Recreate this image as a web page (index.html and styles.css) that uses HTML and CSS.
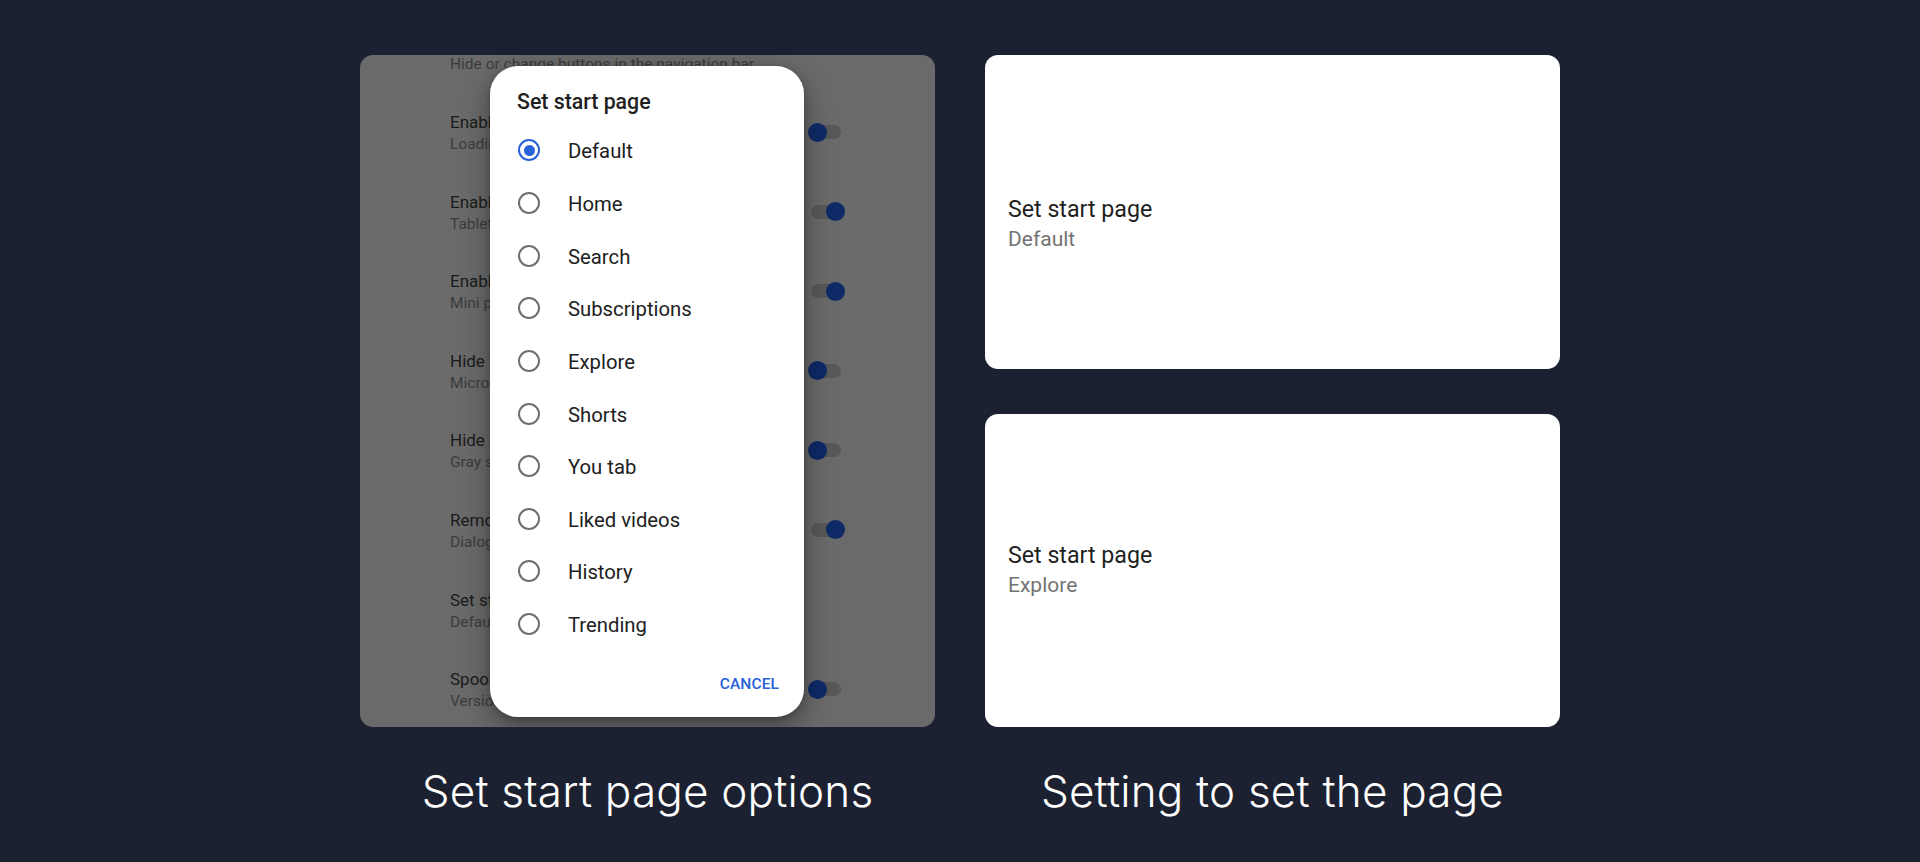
FILE: index.html
```html
<!DOCTYPE html>
<html lang="en">
<head>
<meta charset="utf-8">
<title>Set start page</title>
<link rel="stylesheet" href="styles.css">
</head>
<body>
<main class="stage">
  <section class="column">
    <div class="panel">
      <ul class="settings">
        <li class="row"><div class="row-text"><div class="row-title">Navigation buttons</div><div class="row-sum">Hide or change buttons in the navigation bar</div></div></li>
        <li class="row"><div class="row-text"><div class="row-title">Enable gradient loading screen</div><div class="row-sum">Loading screen will have a gradient background</div></div><span class="switch"><span class="thumb"></span></span></li>
        <li class="row"><div class="row-text"><div class="row-title">Enable tablet layout</div><div class="row-sum">Tablet layout is enabled</div></div><span class="switch on"><span class="thumb"></span></span></li>
        <li class="row"><div class="row-text"><div class="row-title">Enable tablet mini player</div><div class="row-sum">Mini player is enabled</div></div><span class="switch on"><span class="thumb"></span></span></li>
        <li class="row"><div class="row-text"><div class="row-title">Hide floating microphone button</div><div class="row-sum">Microphone button is shown</div></div><span class="switch"><span class="thumb"></span></span></li>
        <li class="row"><div class="row-text"><div class="row-title">Hide gray separator</div><div class="row-sum">Gray separators are shown</div></div><span class="switch"><span class="thumb"></span></span></li>
        <li class="row"><div class="row-text"><div class="row-title">Remove viewer discretion dialog</div><div class="row-sum">Dialog will be removed</div></div><span class="switch on"><span class="thumb"></span></span></li>
        <li class="row"><div class="row-text"><div class="row-title">Set start page</div><div class="row-sum">Default</div></div></li>
        <li class="row"><div class="row-text"><div class="row-title">Spoof app version</div><div class="row-sum">Version not spoofed</div></div><span class="switch"><span class="thumb"></span></span></li>
      </ul>
      <div class="dialog">
        <h2 class="dialog-title">Set start page</h2>
        <ul class="options">
          <li class="option"><span class="radio checked"></span><span class="option-label">Default</span></li>
          <li class="option"><span class="radio"></span><span class="option-label">Home</span></li>
          <li class="option"><span class="radio"></span><span class="option-label">Search</span></li>
          <li class="option"><span class="radio"></span><span class="option-label">Subscriptions</span></li>
          <li class="option"><span class="radio"></span><span class="option-label">Explore</span></li>
          <li class="option"><span class="radio"></span><span class="option-label">Shorts</span></li>
          <li class="option"><span class="radio"></span><span class="option-label">You tab</span></li>
          <li class="option"><span class="radio"></span><span class="option-label">Liked videos</span></li>
          <li class="option"><span class="radio"></span><span class="option-label">History</span></li>
          <li class="option"><span class="radio"></span><span class="option-label">Trending</span></li>
        </ul>
        <div class="dialog-actions"><span class="btn">CANCEL</span></div>
      </div>
    </div>
    <p class="caption">Set start page options</p>
  </section>
  <section class="column">
    <div class="cards">
      <div class="card card-low"><div class="card-title">Set start page</div><div class="card-sum">Default</div></div>
      <div class="card"><div class="card-title">Set start page</div><div class="card-sum">Explore</div></div>
    </div>
    <p class="caption">Setting to set the page</p>
  </section>
</main>
</body>
</html>
```

FILE: styles.css
```css
* { box-sizing: border-box; }
html, body { margin: 0; padding: 0; }
body {
  background: #1c2131;
  font-family: Roboto, "Liberation Sans", sans-serif;
  height: 862px;
  overflow: hidden;
}
.stage {
  width: 1200px;
  margin: 0 auto;
  padding-top: 55px;
  display: grid;
  grid-template-columns: 575px 575px;
  column-gap: 50px;
}
.column { display: flex; flex-direction: column; }

/* left panel */
.panel {
  position: relative;
  height: 672px;
  background: #6a6a6a;
  border-radius: 13px;
  overflow: hidden;
}
.settings {
  list-style: none;
  margin: -41.4px 0 0 0;
  padding: 0 94px 0 90px;
}
.row {
  height: 79.6px;
  display: flex;
  align-items: center;
  justify-content: space-between;
}
.row-text { display: flex; flex-direction: column; white-space: nowrap; }
.row-title { font-size: 17px; line-height: 22px; color: #1a1a1a; }
.row-sum { font-size: 15.5px; line-height: 22px; color: #3c3c3c; }
.switch {
  position: relative;
  width: 30px;
  height: 14px;
  border-radius: 7px;
  background: #585858;
  flex: none;
  margin-top: -2px;
}
.thumb {
  position: absolute;
  top: -2.5px;
  left: -3px;
  width: 19px;
  height: 19px;
  border-radius: 50%;
  background: #0e2a67;
}
.switch.on .thumb { left: 15px; }

/* dialog */
.dialog {
  position: absolute;
  left: 130px;
  top: 11px;
  width: 314px;
  height: 651px;
  background: #ffffff;
  border-radius: 28px;
  box-shadow: 0 10px 28px rgba(0,0,0,0.38), 0 2px 6px rgba(0,0,0,0.2);
  padding: 22px 25px 0 27px;
  display: flex;
  flex-direction: column;
}
.dialog-title {
  margin: 0;
  font-size: 21.3px;
  line-height: 28px;
  font-weight: 500;
  color: #1f1f1f;
}
.options {
  list-style: none;
  margin: 9px 0 0 0;
  padding: 0;
}
.option {
  height: 52.65px;
  display: flex;
  align-items: center;
}
.radio {
  width: 22px;
  height: 22px;
  border-radius: 50%;
  border: 2.2px solid #6f6f6f;
  margin-left: 1px;
  margin-top: -2px;
  flex: none;
  display: flex;
  align-items: center;
  justify-content: center;
}
.radio.checked { border-color: #2a62d8; }
.radio.checked::after {
  content: "";
  width: 11px;
  height: 11px;
  border-radius: 50%;
  background: #2a62d8;
}
.option-label {
  margin-left: 28px;
  font-size: 20.3px;
  color: #212121;
}
.dialog-actions {
  display: flex;
  justify-content: flex-end;
  margin-top: 15px;
  height: 36px;
  align-items: center;
}
.btn {
  font-size: 15.5px;
  font-weight: 500;
  color: #2660d8;
  letter-spacing: 0.1px;
}

/* right cards */
.cards {
  display: flex;
  flex-direction: column;
  gap: 45px;
}
.card {
  height: 313.5px;
  background: #ffffff;
  border-radius: 13px;
  padding: 0 23px;
  display: flex;
  flex-direction: column;
  justify-content: center;
}
.card-low { padding-top: 24px; }
.card-title { font-size: 23.2px; line-height: 30px; color: #1f1f1f; }
.card-sum { font-size: 21px; line-height: 30px; color: #737373; }

/* captions */
.caption {
  margin: 34px 0 0 0;
  text-align: center;
  font-family: Inter, "Open Sans", sans-serif;
  font-size: 44px;
  line-height: 60px;
  font-weight: 300;
  color: #ffffff;
  letter-spacing: 0.2px;
}
```
